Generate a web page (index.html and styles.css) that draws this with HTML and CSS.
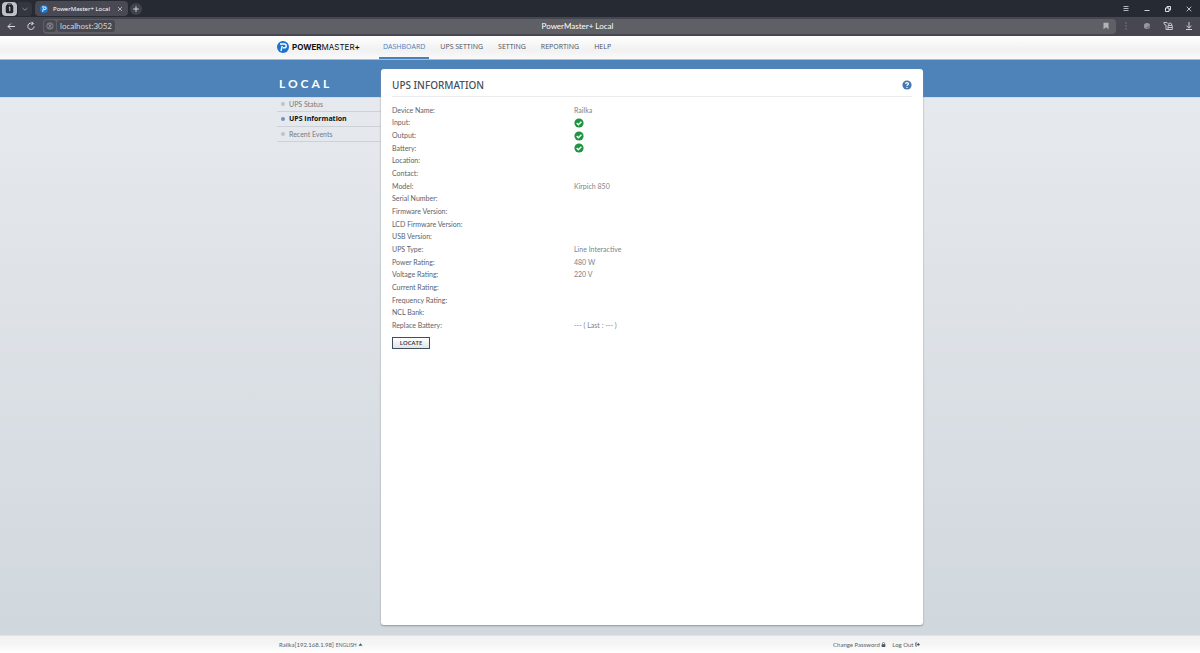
FILE: index.html
```html
<!DOCTYPE html>
<html lang="en">
<head>
<meta charset="utf-8">
<title>PowerMaster+ Local</title>
<link rel="stylesheet" href="styles.css">
</head>
<body>
<div class="browser">
  <div class="tabstrip">
    <button class="group" aria-label="Tab group"><svg viewBox="0 0 16 14"><rect x="4" y="3" width="8" height="9" rx="2" fill="#20242c"/><path d="M6 3V2h4v1" stroke="#20242c" fill="none"/><path d="M7.3 6l1-.8v4.6" stroke="#e8e8ea" fill="none"/></svg></button>
    <button class="drop" aria-label="Tab list"><svg viewBox="0 0 14 14"><path d="M4.500 6L7 8.200l2.500-2.200" stroke="#85868e" fill="none"/></svg></button>
    <div class="tab">
      <svg class="favicon" viewBox="0 0 12 12"><circle cx="6" cy="6" r="6" fill="#1b78cf"/><path d="M3 3h4.300a1.900 1.900 0 0 1 0 3.800H6M5.200 4.800L4 10" stroke="#fff" stroke-width="1.500" fill="none"/></svg>
      <span class="tab-title">PowerMaster+ Local</span>
      <button class="tab-close" aria-label="Close tab"><svg viewBox="0 0 6 6"><path d="M1 1l4 4M5 1L1 5" stroke="#c9c9ce" stroke-width=".8"/></svg></button>
    </div>
    <button class="newtab" aria-label="New tab"><svg viewBox="0 0 12 12"><path d="M6 3.200v5.600M3.200 6h5.600" stroke="#d4d4d8"/></svg></button>
    <div class="window">
      <button aria-label="Menu"><svg viewBox="0 0 8 8"><path d="M1.500 1.500h5M1.500 3.500h5M1.500 5.500h5" stroke="#c4c4c8" stroke-width=".9"/></svg></button>
      <button aria-label="Minimize"><svg viewBox="0 0 8 8"><path d="M1.500 5.500h5" stroke="#d0d0d4"/></svg></button>
      <button aria-label="Restore"><svg viewBox="0 0 8 8"><path d="M1.500 3h3.500v3.500H1.500zM3 3V1.500h3.500V5H5" stroke="#e0e0e4" fill="none"/></svg></button>
      <button aria-label="Close"><svg viewBox="0 0 8 8"><path d="M1.700 1.700l4.600 4.600M6.300 1.700L1.700 6.300" stroke="#d0d0d4" stroke-width=".9"/></svg></button>
    </div>
  </div>
  <div class="toolbar">
    <button aria-label="Back"><svg viewBox="0 0 10 10"><path d="M9 5.500H2M5 2.500L2 5.500l3 3" stroke="#dcdce0" fill="none"/></svg></button>
    <button aria-label="Reload"><svg viewBox="0 0 10 10"><path d="M8.200 5.500A3.200 3.200 0 1 1 6.800 2.600M5.800.9l1.700 1.800-2.300 1.100" stroke="#dcdce0" fill="none"/></svg></button>
    <div class="omnibox">
      <button class="site" aria-label="Site information"><svg viewBox="0 0 10 10"><circle cx="5" cy="5" r="3.200" stroke="#94949b" fill="none" stroke-width=".8"/><path d="M2.600 3l5 4M5 2v6M3 7l4-4" stroke="#94949b" stroke-width=".7"/></svg></button>
      <span class="host">localhost:3052</span>
      <span class="page-title">PowerMaster+ Local</span>
      <button class="bookmark" aria-label="Bookmark"><svg viewBox="0 0 8 8"><path d="M1.500.8h5v6.400L4 5.300 1.500 7.200z" fill="#b4b4b8"/></svg></button>
    </div>
    <div class="extensions">
      <button aria-label="More"><svg viewBox="0 0 10 10"><g fill="#85858d"><circle cx="5" cy="2" r=".7"/><circle cx="5" cy="5" r=".7"/><circle cx="5" cy="8" r=".7"/></g></svg></button>
      <button aria-label="Extension"><svg viewBox="0 0 10 10"><circle cx="5" cy="5" r="3.100" fill="#98989b"/><path d="M3.500 7l4.400-3v2.200L6 8z" fill="#74747a"/></svg></button>
      <button aria-label="Passwords"><svg viewBox="0 0 10 10"><path d="M4 1.500H.8l.7 2 1.500.5v4.500h2M5 4.500h4.300v4H5zM5.800 4.500V3a1.500 1.500 0 0 1 2.800 0v1.500M4 1.500L5.500 3M5 6.500h4" stroke="#d0d0d4" fill="none" stroke-width=".9"/></svg></button>
      <button aria-label="Downloads"><svg viewBox="0 0 10 10"><path d="M5 1v6M2.500 4.700L5 7.200l2.500-2.500M2 8.500h6" stroke="#d0d0d4" fill="none"/></svg></button>
    </div>
  </div>
</div>

<header class="header">
  <div class="wrap header-row">
    <a class="logo" href="#"><svg viewBox="0 0 12 12"><circle cx="6" cy="6" r="6" fill="#1b72cf"/><path d="M3 3h4.300a1.900 1.900 0 0 1 0 3.800H6M5.200 4.800L4 10" stroke="#fff" stroke-width="1.400" fill="none"/></svg><span><b>POWER</b>MASTER<b>+</b></span></a>
    <nav class="nav">
      <a class="active" href="#">DASHBOARD</a>
      <a href="#">UPS SETTING</a>
      <a href="#">SETTING</a>
      <a href="#">REPORTING</a>
      <a href="#">HELP</a>
    </nav>
  </div>
</header>

<main class="main">
  <div class="wrap columns">
    <aside class="side">
      <h2>LOCAL</h2>
      <ul>
        <li><a href="#">UPS Status</a></li>
        <li class="current"><a href="#">UPS Information</a></li>
        <li><a href="#">Recent Events</a></li>
      </ul>
    </aside>
    <section class="panel">
      <div class="panel-head">
        <h1>UPS INFORMATION</h1>
        <button class="help" aria-label="Help"><svg viewBox="0 0 10 10"><circle cx="5" cy="5" r="4.600" fill="#4677b0"/><path d="M3.500 3.900C3.600 2.200 6.500 2.200 6.500 3.800 6.500 4.900 5 4.700 5 6M5 6.900v1.200" stroke="#fff" stroke-width="1.200" fill="none"/></svg></button>
      </div>
      <table class="info">
        <tr><th scope="row">Device Name:</th><td>Railka</td></tr>
        <tr><th scope="row">Input:</th><td><svg class="ok" viewBox="0 0 10 10"><circle cx="5" cy="5" r="4.600" fill="#1d9440"/><path d="M2.700 5l1.700 1.700L7.400 3.700" stroke="#fff" stroke-width="1.400" fill="none"/></svg></td></tr>
        <tr><th scope="row">Output:</th><td><svg class="ok" viewBox="0 0 10 10"><circle cx="5" cy="5" r="4.600" fill="#1d9440"/><path d="M2.700 5l1.700 1.700L7.400 3.700" stroke="#fff" stroke-width="1.400" fill="none"/></svg></td></tr>
        <tr><th scope="row">Battery:</th><td><svg class="ok" viewBox="0 0 10 10"><circle cx="5" cy="5" r="4.600" fill="#1d9440"/><path d="M2.700 5l1.700 1.700L7.400 3.700" stroke="#fff" stroke-width="1.400" fill="none"/></svg></td></tr>
        <tr><th scope="row">Location:</th><td></td></tr>
        <tr><th scope="row">Contact:</th><td></td></tr>
        <tr><th scope="row">Model:</th><td>Kirpich 850</td></tr>
        <tr><th scope="row">Serial Number:</th><td></td></tr>
        <tr><th scope="row">Firmware Version:</th><td></td></tr>
        <tr><th scope="row">LCD Firmware Version:</th><td></td></tr>
        <tr><th scope="row">USB Version:</th><td></td></tr>
        <tr><th scope="row">UPS Type:</th><td>Line Interactive</td></tr>
        <tr><th scope="row">Power Rating:</th><td>480 W</td></tr>
        <tr><th scope="row">Voltage Rating:</th><td>220 V</td></tr>
        <tr><th scope="row">Current Rating:</th><td></td></tr>
        <tr><th scope="row">Frequency Rating:</th><td></td></tr>
        <tr><th scope="row">NCL Bank:</th><td></td></tr>
        <tr><th scope="row">Replace Battery:</th><td>--- ( Last : --- )</td></tr>
      </table>
      <button class="locate">LOCATE</button>
    </section>
  </div>
</main>

<footer class="footer">
  <div class="wrap footer-row">
    <span>Railka[192.168.1.98]</span>
    <button class="lang">ENGLISH <svg viewBox="0 0 6 6"><path d="M.5 4.500L3 1.500l2.500 3z" fill="#4d5866"/></svg></button>
    <a class="password" href="#">Change Password <svg viewBox="0 0 6 6"><path d="M.8 2.600h4.400V6H.8z" fill="#4d5866"/><path d="M1.700 3V1.800a1.300 1.300 0 0 1 2.600 0V3" stroke="#4d5866" fill="none" stroke-width=".8"/></svg></a>
    <a href="#">Log Out <svg viewBox="0 0 6 6"><path d="M2.400 1H.8v4h1.600" stroke="#4d5866" fill="none" stroke-width=".9"/><path d="M2 2.200h1.700V.8L6 3 3.700 5.200V3.800H2z" fill="#4d5866"/></svg></a>
  </div>
</footer>
</body>
</html>
```
FILE: styles.css
```css
* { box-sizing: border-box; }

body {
  margin: 0;
  min-height: 100vh;
  display: flex;
  flex-direction: column;
  font-family: "Open Sans", "Noto Sans", sans-serif;
  font-size: 7px;
  color: #59636e;
}

button { border: 0; padding: 0; background: none; font: inherit; color: inherit; }
a { color: inherit; text-decoration: none; }
h1, h2, ul { margin: 0; padding: 0; font-weight: 400; }
svg { display: block; }
.wrap { width: 100%; max-width: 646px; margin: 0 auto; }

/* Browser frame */
.tabstrip { display: flex; align-items: center; height: 17px; padding: 0 4px 0 2px; background: #252a33; color: #fff; }
.group { width: 15px; height: 14px; border-radius: 4px; background: #c1c1c8; }
.drop { width: 14px; height: 14px; margin-left: 1px; border-radius: 0 4px 4px 0; background: #343741; }
.tab { display: flex; align-items: center; width: 93px; height: 15px; margin: 0 2px 0 3px; padding: 0 5px; border-radius: 4px; background: #484952; }
.favicon { width: 8px; height: 8px; margin-right: 5px; }
.tab-title { font-family: "Noto Sans", sans-serif; font-size: 6px; white-space: nowrap; }
.tab-close { width: 6px; height: 6px; margin-left: auto; }
.newtab { width: 12px; height: 12px; border-radius: 6px; background: #41434c; }
.window { display: flex; gap: 13px; margin-left: auto; padding-right: 3px; }
.window svg { width: 8px; height: 8px; }
.toolbar { display: flex; align-items: center; gap: 10px; height: 19px; padding: 0 6px; border-bottom: 1px solid #484751; background: #484751; }
.toolbar svg { width: 10px; height: 10px; }
.omnibox { position: relative; display: flex; flex: 1; align-items: center; height: 15px; margin-left: -3px; padding: 0 6px 0 1px; border-radius: 4px; background: #5f6066; color: #d8d8dc; font-family: Lato, sans-serif; font-size: 8px; }
.site { padding: 1px; height: 12px; border-radius: 3px; background: #474850; }
.host { height: 12px; margin-left: 1px; padding: 0 3px; border-radius: 3px; background: #474850; line-height: 12px; }
.page-title { position: absolute; left: 0; right: 4px; text-align: center; color: #fff; pointer-events: none; }
.bookmark { margin-left: auto; }
.toolbar .bookmark svg { width: 8px; height: 8px; }
.extensions { display: flex; gap: 11px; margin-left: -5px; }

/* Site header */
.header { border-bottom: 1px solid #a7bfd4; background: linear-gradient(#fff, #f1f1f1 60%, #fafafa); }
.header-row { display: flex; height: 23px; }
.logo { display: flex; align-items: center; gap: 4px; width: 102px; padding-bottom: 1px; font-family: Inter, sans-serif; font-size: 8px; color: #111; }
.logo svg { width: 12px; height: 12px; }
.logo span { margin-left: -1px; }
.nav { display: flex; gap: 7px; line-height: 22px; color: #4c4f54; }
.nav a { padding: 0 4px; }
.nav .active { border-bottom: 2px solid #4b80b8; color: #4b80b8; }

/* Content */
.main { display: flex; flex: 1; padding: 9px 0 10px; background: linear-gradient(#4d83b9 37px, #c5ced7 37px, #e6e9ed 38px, #dfe3e8 220px, #d0d7dd); }
.columns { display: flex; }
.side { width: 104px; }
.side h2 { height: 28px; padding-left: 2px; font-family: Lato, sans-serif; font-size: 12px; font-weight: 700; line-height: 29px; letter-spacing: 3px; color: #fff; }
.side ul { list-style: none; font-family: Lato, "Open Sans", sans-serif; }
.side li { height: 15px; border-bottom: 1px solid #cdd2d7; line-height: 14px; color: #727b85; }
.side li a { display: flex; align-items: center; gap: 4px; padding-left: 4px; }
.side li a::before { content: ""; width: 4px; height: 4px; border-radius: 2px; background: #bcc3ca; }
.side .current { font-family: "Open Sans", sans-serif; font-weight: 700; color: #111; }
.side .current a::before { background: #6d97c2; }
.panel { flex: 1; padding: 0 11px; border-radius: 3px; background: #fff; box-shadow: 0 1px 2px #8d969f; }
.panel-head { display: flex; align-items: center; justify-content: space-between; height: 28px; padding-top: 5px; border-bottom: 1px solid #e9ebed; }
.panel h1 { font-family: "Noto Sans", sans-serif; font-size: 10px; font-weight: 500; color: #45505c; }
.help svg { width: 10px; height: 10px; }
.info { width: 100%; height: 228px; margin-top: 7px; border-collapse: collapse; table-layout: fixed; font-family: Lato, "Open Sans", sans-serif; line-height: 11px; }
.info th, .info td { padding: 0; text-align: left; font-weight: 400; }
.info th { width: 182px; }
.info td { color: #7c8389; }
.ok { width: 10px; height: 10px; }
.locate { display: block; width: 38px; height: 12px; margin-top: 5px; border: 1px solid #3f4e60; background: linear-gradient(#fff, #dfe4e8); font-size: 6px; font-weight: 600; line-height: 10px; color: #333; }

/* Footer */
.footer { background: linear-gradient(#f1f1f1, #f5f5f5 8px, #fff); border-top: 1px solid #e2e5e8; font-family: Lato, "Open Sans", sans-serif; font-size: 6px; }
.footer-row { display: flex; align-items: center; height: 17px; padding: 0 3px 0 2px; }
.footer svg { display: inline-block; width: 5px; height: 5px; }
.lang { margin-left: 2px; font-size: 5px; }
.password { margin: 0 6px 0 auto; }
```
